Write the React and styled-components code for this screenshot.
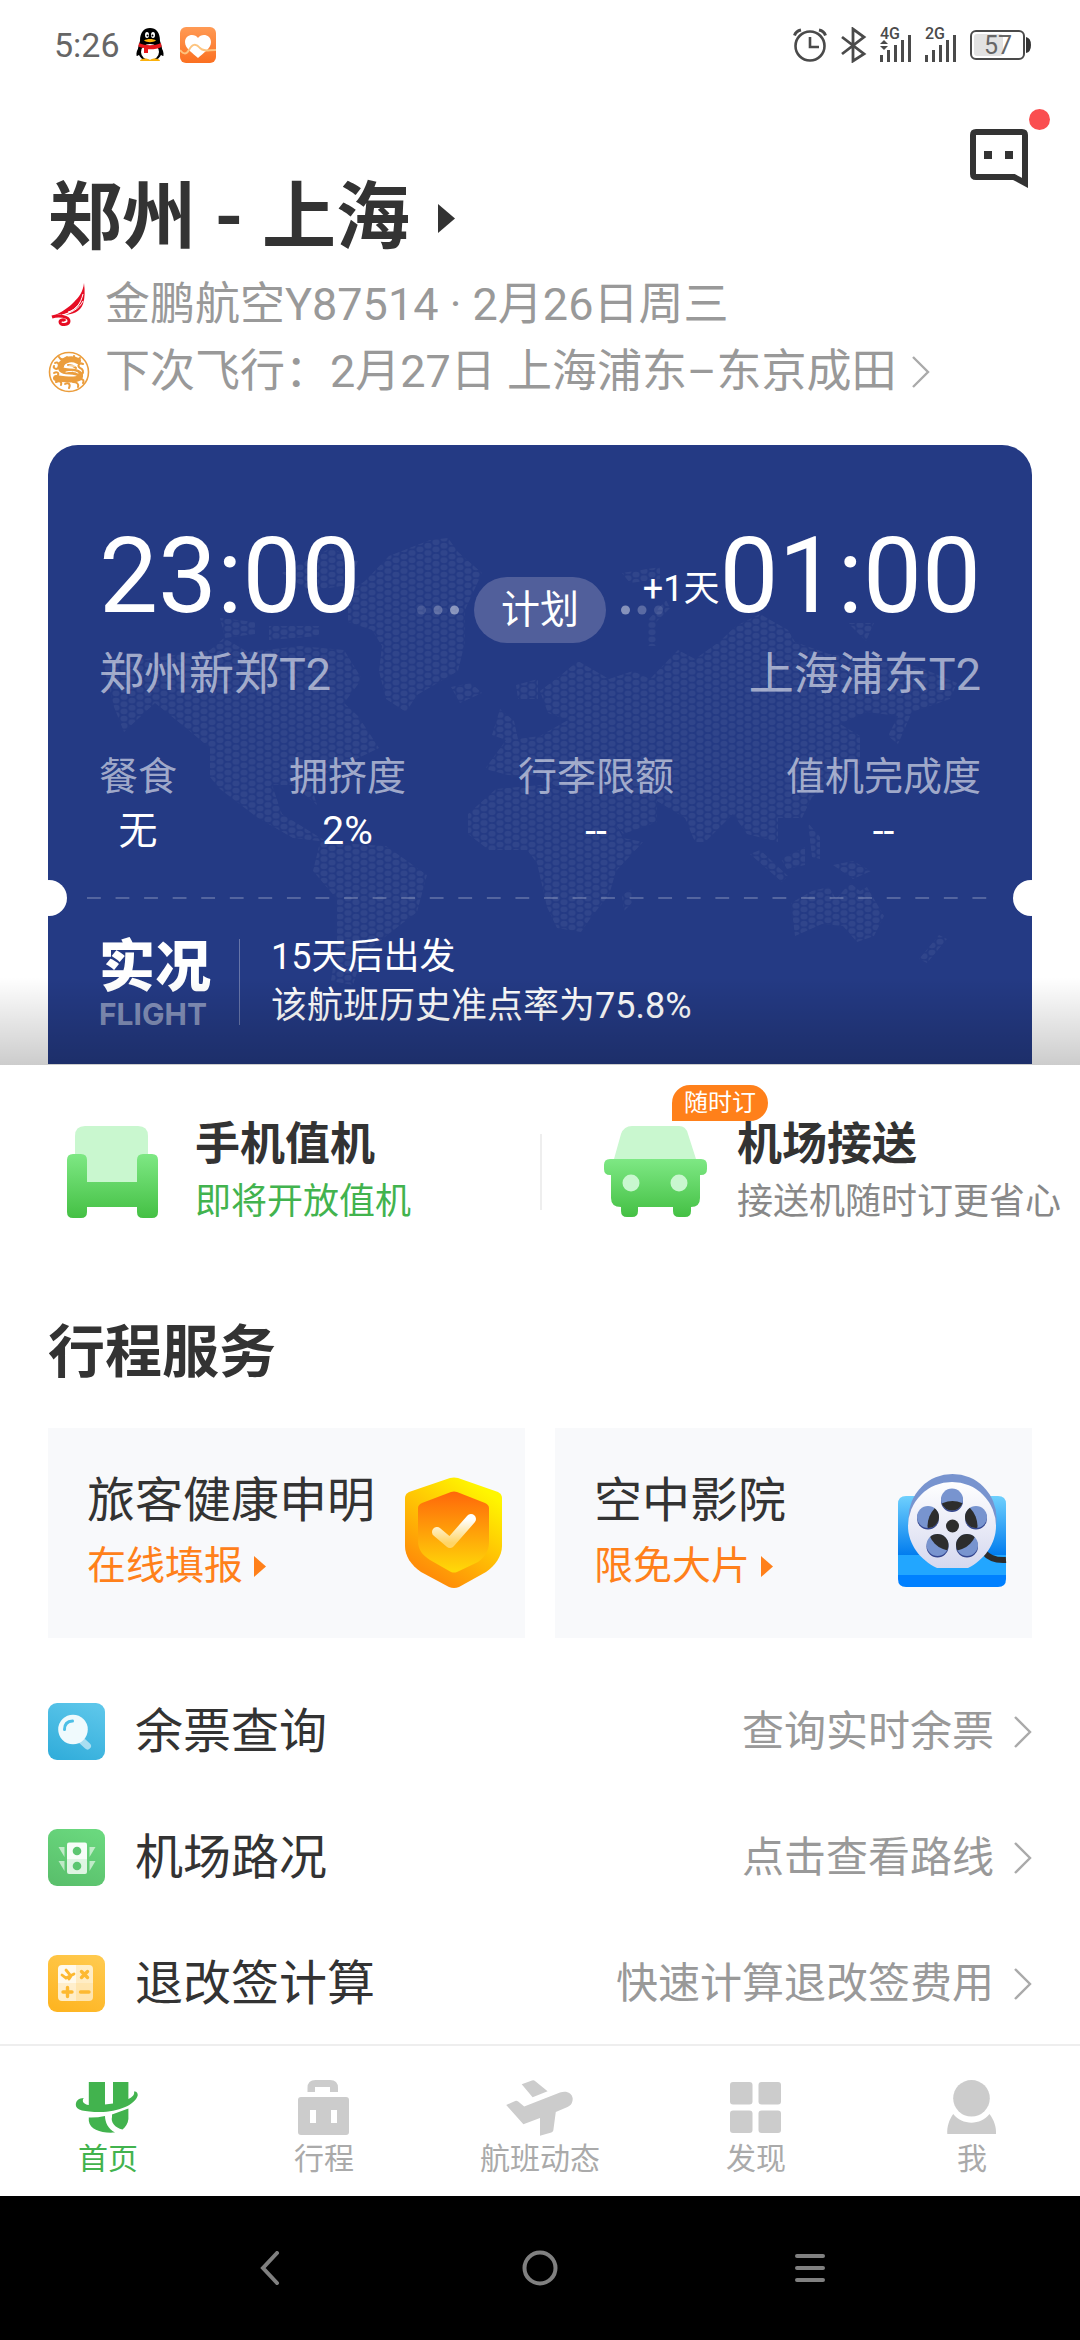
import React, { useState } from "react";
import styled, { createGlobalStyle } from "styled-components";

const GlobalStyle = createGlobalStyle`
  * {
    box-sizing: border-box;
  }

  body {
    margin: 0;
    background-color: #fff;
    color: #333;
    font-family: Roboto, "Noto Sans CJK SC", sans-serif;
  }

  h1, h2, h3, p, dl, dt, dd {
    margin: 0;
  }

  a {
    color: inherit;
    text-decoration: none;
  }

  button {
    padding: 0;
    border: none;
    background: none;
    color: inherit;
    font: inherit;
    cursor: pointer;
  }

  svg {
    display: block;
    flex-shrink: 0;
  }
`;

const Page = styled.div`
  display: flex;
  flex-direction: column;
  min-height: 100vh;
`;

const Main = styled.main`
  flex: 1;
`;

const StatusBar = styled.div`
  display: flex;
  justify-content: space-between;
  align-items: center;
  height: 90px;
  padding: 0 48px 0 54px;
  font-size: 34px;
  color: #666;
`;

const StatusGroup = styled.div`
  display: flex;
  align-items: center;
  gap: ${(props) => props.$gap}px;
`;

const Header = styled.header`
  padding: 39px 48px 40px;
`;

const HeaderTop = styled.div`
  display: flex;
  justify-content: space-between;
  align-items: flex-start;
  margin-bottom: 11px;
`;

const Route = styled.button`
  display: flex;
  align-items: center;
  gap: 28px;
  margin-top: 47px;
`;

const RouteName = styled.h1`
  font-size: 74px;
  line-height: 84px;
  font-weight: 700;
`;

const MessageButton = styled.button`
  position: relative;
`;

const RedDot = styled.span`
  position: absolute;
  top: -20px;
  right: -18px;
  width: 21px;
  height: 21px;
  border-radius: 50%;
  background-color: #fa4e50;
`;

const InfoLine = styled.a`
  display: flex;
  align-items: center;
  gap: 15px;
  font-size: 45px;
  line-height: 67px;
  color: #999;
`;

const Hero = styled.section`
  position: relative;
  padding: 0 48px 1px;
`;

const HeroShade = styled.div`
  position: absolute;
  left: 0;
  right: 0;
  bottom: 0;
  height: 88px;
  background: linear-gradient(rgba(0, 0, 0, 0), rgba(0, 0, 0, 0.2));
  pointer-events: none;
`;

const FlightCard = styled.div`
  position: relative;
  padding: 78px 51px 33px;
  border-radius: 30px 30px 0 0;
  background-color: #243a84;
  color: #fff;
`;

const MapLayer = styled.svg`
  position: absolute;
  left: 0;
  top: 0;
  width: 100%;
`;

const Legs = styled.div`
  position: relative;
  display: grid;
  grid-template-columns: 1fr auto 1fr;
`;

const Leg = styled.div`
  display: flex;
  flex-direction: column;
  align-items: ${(props) => (props.$end ? "flex-end" : "flex-start")};
  gap: 14px;
  min-width: 0;
  white-space: nowrap;
`;

const Clock = styled.div`
  display: flex;
  align-items: flex-end;
  font-size: 105px;
  line-height: 108px;
`;

const DayOffset = styled.span`
  font-size: 36px;
  line-height: 84px;
`;

const Airport = styled.span`
  font-size: 45px;
  line-height: 60px;
  color: rgba(255, 255, 255, 0.58);
`;

const PlanStatus = styled.div`
  display: flex;
  align-items: center;
  align-self: start;
  gap: 15px;
  margin-top: 54px;
`;

const Pill = styled.span`
  padding: 0 27px;
  border-radius: 33px;
  background-color: #515f9b;
  font-size: 39px;
  line-height: 66px;
`;

const Stats = styled.dl`
  position: relative;
  display: flex;
  justify-content: space-between;
  margin-top: 45px;
  font-size: 39px;
  line-height: 54px;
  text-align: center;

  dt {
    color: rgba(255, 255, 255, 0.58);
  }
`;

const Tear = styled.div`
  position: relative;
  margin: 39px -51px 34px;
  padding: 0 31px 0 39px;
`;

const TearLine = styled.div`
  height: 2px;
  background-image: linear-gradient(90deg, rgba(255, 255, 255, 0.22) 50%, transparent 50%);
  background-size: 29px 2px;
  background-repeat: round;
`;

const Notch = styled.span`
  position: absolute;
  top: -17px;
  ${(props) => props.$side}: -17px;
  width: 36px;
  height: 36px;
  border-radius: 50%;
  background-color: #fff;
`;

const Live = styled.div`
  position: relative;
  display: flex;
  align-items: center;
`;

const LiveLogo = styled.div`
  display: flex;
  flex-direction: column;
  width: 140px;
  font-weight: 900;
  font-size: 56px;
  line-height: 64px;

  small {
    font-family: Inter, sans-serif;
    font-weight: 700;
    font-size: 30px;
    line-height: 30px;
    color: rgba(255, 255, 255, 0.45);
  }
`;

const LiveText = styled.div`
  position: relative;
  padding-left: 32px;
  font-size: 36px;
  line-height: 49px;

  &::before {
    content: "";
    position: absolute;
    left: 0;
    top: 6px;
    bottom: 6px;
    width: 1px;
    background-color: rgba(255, 255, 255, 0.3);
  }
`;

const Shortcuts = styled.section`
  display: grid;
  grid-template-columns: 1fr 1fr;
  align-items: center;
  padding: 50px 0 0;
`;

const Shortcut = styled.a`
  position: relative;
  display: flex;
  align-items: center;
  gap: 29px;
  padding-left: ${(props) => (props.$second ? 60 : 58)}px;
  white-space: nowrap;
`;

const ShortcutDivider = styled.span`
  position: absolute;
  left: 0;
  width: 2px;
  height: 76px;
  background-color: #eee;
`;

const ShortcutTitle = styled.h3`
  font-size: 45px;
  line-height: 60px;
  font-weight: 700;
`;

const ShortcutNote = styled.p`
  font-size: 36px;
  line-height: 54px;
  color: ${(props) => props.$color};
`;

const Tag = styled.span`
  position: absolute;
  left: 132px;
  top: -30px;
  padding: 0 12px;
  border-radius: 18px 18px 18px 0;
  background-color: #ff801a;
  color: #fff;
  font-size: 24px;
  line-height: 36px;
`;

const Services = styled.section`
  padding: 88px 48px 30px;
`;

const SectionTitle = styled.h2`
  font-size: 57px;
  line-height: 72px;
  font-weight: 700;
`;

const Promos = styled.div`
  display: grid;
  grid-template-columns: 1fr 1fr;
  gap: 30px;
  margin: 39px 0 65px;
`;

const Promo = styled.a`
  display: flex;
  justify-content: space-between;
  align-items: center;
  padding: 40px 16px 40px 39px;
  background-color: #f8f9fb;
  white-space: nowrap;
`;

const PromoTitle = styled.h3`
  font-size: 48px;
  line-height: 66px;
  font-weight: 400;
`;

const PromoNote = styled.p`
  display: flex;
  align-items: center;
  gap: 11px;
  font-size: 39px;
  line-height: 64px;
  color: #ff801a;
`;

const ServiceList = styled.div`
  display: flex;
  flex-direction: column;
  gap: 69px;
`;

const ServiceRow = styled.a`
  display: flex;
  align-items: center;
  font-size: 48px;
  line-height: 57px;
`;

const ServiceName = styled.span`
  flex: 1;
  padding-left: 30px;
`;

const ServiceHint = styled.span`
  margin-right: 20px;
  font-size: 42px;
  color: #999;
`;

const TabBar = styled.nav`
  display: grid;
  grid-template-columns: repeat(5, 1fr);
  border-top: 2px solid #eee;
  background-color: #fff;
`;

const Tab = styled.button`
  display: flex;
  flex-direction: column;
  align-items: center;
  gap: 5px;
  padding: 34px 0 19px;
  font-size: 30px;
  line-height: 36px;
  color: ${(props) => (props.$active ? "#42b34e" : "#aaa")};

  svg {
    fill: ${(props) => (props.$active ? "#42b34e" : "#ccc")};
  }
`;

const SystemNav = styled.div`
  display: grid;
  grid-template-columns: repeat(3, 1fr);
  align-items: center;
  justify-items: center;
  height: 144px;
  padding: 0 12.5%;
  background-color: #000;
`;

function PenguinIcon() {
  return (
    <svg width="28" height="34" viewBox="0 0 28 34">
      <path d="M4 18C1 21 0 25 .6 28c1.600 0 3-1.500 4-3zM24 18c3 3 4 7 3.400 10-1.600 0-3-1.500-4-3z" fill="#000" />
      <path d="M4 13C4 4 8 0 14 0s10 4 10 13c1 3 2 6 2 9 0 7-5 11-12 11S2 29 2 22c0-3 1-6 2-9z" fill="#000" />
      <ellipse cx="14" cy="24" rx="9" ry="8" fill="#fff" />
      <path d="M4 33c0-2 4-3 8-2l2 1 2-1c4-1 8 0 8 2z" fill="#fbb10c" />
      <ellipse cx="11" cy="7" rx="2" ry="3" fill="#fff" />
      <ellipse cx="17" cy="7" rx="2" ry="3" fill="#fff" />
      <circle cx="11.500" cy="7.500" r="1" fill="#000" />
      <circle cx="16.500" cy="7.500" r="1" fill="#000" />
      <path d="M8 12.500c3-2 9-2 12 0-3 2.200-9 2.200-12 0z" fill="#fbb10c" />
      <path d="M3 15c6 3 16 3 22 0l.600 4c-4 2-9 2.500-13.600 2.200V25H8v-5c-2-.300-4-.700-5.600-1.500z" fill="#e8161b" />
    </svg>
  );
}

function HealthIcon() {
  return (
    <svg width="36" height="36" viewBox="0 0 36 36">
      <defs>
        <linearGradient id="health" x1="0" y1="0" x2="0" y2="1">
          <stop offset="0" stopColor="#ff9a55" />
          <stop offset="1" stopColor="#fb7021" />
        </linearGradient>
      </defs>
      <rect width="36" height="36" rx="6" fill="url(#health)" />
      <path d="M18 11c3-5 13-4 13 4 0 7-8 11-13 16C13 26 5 22 5 15c0-8 10-9 13-4z" fill="#fff" />
      <path d="M0 23c3 4 6 5 9 0 3-6 7-7 11-2 4 4 8 2 16 2" fill="none" stroke="#fdc47f" strokeWidth="2" />
    </svg>
  );
}

function AlarmIcon() {
  return (
    <svg width="34" height="36" viewBox="0 0 34 36" fill="none" stroke="#4a4a4a" strokeWidth="2.600">
      <circle cx="17" cy="19" r="14.500" />
      <path d="M17 10v10h9" />
      <path d="M1.500 8.500Q3 4 8 3M32.500 8.500Q31 4 26 3" strokeWidth="3" />
    </svg>
  );
}

function BluetoothIcon() {
  return (
    <svg width="27" height="36" viewBox="0 0 27 36" fill="none" stroke="#4a4a4a" strokeWidth="2.800">
      <path d="M2 10l22 17-11 7V2l11 8L2 27" />
    </svg>
  );
}

function SignalIcon({ label, data }) {
  return (
    <svg width="32" height="52" viewBox="0 -8 32 52" fill="#4a4a4a">
      <text x="0" y="12" fontFamily="Roboto" fontSize="16" fontWeight="500">
        {label}
      </text>
      {data && <path d="M0 17l4-4 4 4zM0 19h8l-4 4z" />}
      <rect x="0" y="28" width="3" height="7" />
      <rect x="7" y="23" width="3" height="12" />
      <rect x="14" y="18" width="3" height="17" />
      <rect x="21" y="13" width="3" height="22" />
      <rect x="28" y="8" width="3" height="27" />
    </svg>
  );
}

function BatteryIcon({ level }) {
  return (
    <svg width="62" height="32" viewBox="0 0 62 32">
      <rect x="1" y="2" width="53" height="28" rx="5" fill="none" stroke="#4a4a4a" strokeWidth="2" />
      <rect x="4" y="5" width="29" height="22" rx="3" fill="#e2e2e2" />
      <path d="M56 8q5 1 5 8t-5 8z" fill="#333" />
      <text x="28" y="25" textAnchor="middle" fontFamily="Roboto" fontSize="25" fill="#666">
        {level}
      </text>
    </svg>
  );
}

function Triangle({ width, height, color }) {
  return (
    <svg width={width} height={height} viewBox="0 0 10 10" preserveAspectRatio="none">
      <path d="M0 0l10 5-10 5z" fill={color} />
    </svg>
  );
}

function Chevron() {
  return (
    <svg width="18" height="32" viewBox="0 0 18 32" fill="none" stroke="#aaa" strokeWidth="2.400">
      <path d="M1 1l15 15L1 31" />
    </svg>
  );
}

function MessageIcon() {
  return (
    <svg width="62" height="60" viewBox="0 0 62 60">
      <path d="M6 3h46q3 0 3 3v48l-11-6H6q-3 0-3-3V6q0-3 3-3z" fill="none" stroke="#333" strokeWidth="6" />
      <path d="M14 22h8v8h-8zM35 22h8v8h-8z" fill="#333" />
    </svg>
  );
}

function SuparnaLogo() {
  return (
    <svg width="42" height="44" viewBox="0 0 42 44">
      <path d="M36 0c1 8 1 15-1 21-3 8-10 10-18 11 7-3 13-7 16-14-4 6-10 11-19 14-2-1-6 0-9 1C14 29 20 25 26 19c5-5 9-10 10-19z" fill="#e60c23" />
      <path d="M20 29c8-2 13-9 15-18M14 32c9-2 17-6 21-14" stroke="#fff" strokeWidth="1" fill="none" />
      <path d="M4 34c6-2 17-1 17 4 0 4-9 5-9 1 0-2 4-3 5-1" stroke="#e60c23" strokeWidth="3" fill="none" />
    </svg>
  );
}

function JuneyaoLogo() {
  return (
    <svg width="42" height="42" viewBox="0 0 42 42" fill="none" stroke="#eb9d3c" strokeLinecap="round">
      <circle cx="21" cy="21" r="19.500" strokeWidth="1.600" />
      <path d="M30 10c-8-4-18 0-17 7 1 6 16 1 19 7 1 6-11 5-24 3" strokeWidth="6" />
      <path d="M11 6c2 4 5 2 8 0M7 12c3-2 5 2 3 5-2 2-5 0-4-2M26 5c0 4 4 4 6 2M35 13c-4-2-6 2-3 4 3 1 4 4 2 6M6 22c3-2 5 0 4 2M8 31c4-2 6 0 5 3M17 33c3-2 6 0 4 4M25 31c4 0 6 2 5 5M32 28c4 0 4 2 3 4M20 14c3 0 6 1 8 3" strokeWidth="2" />
      <path d="M21 15h6M18 21c4-1 9-1 12 1" stroke="#fff" strokeWidth="1" />
    </svg>
  );
}

function WorldMap() {
  return (
    <MapLayer viewBox="0 0 984 619" aria-hidden="true">
      <defs>
        <pattern id="dots" width="16" height="7.200" patternUnits="userSpaceOnUse">
          <ellipse cx="4" cy="3.600" rx="3.600" ry="2.900" fill="#fff" />
          <ellipse cx="12" cy="0" rx="3.600" ry="2.900" fill="#fff" />
          <ellipse cx="12" cy="7.200" rx="3.600" ry="2.900" fill="#fff" />
        </pattern>
      </defs>
      <g fill="url(#dots)" opacity="0.055">
        <path d="M55 218L97 214 162 205 176 193 200 207 252 201 296 205 314 234 296 258 310 271 331 303 296 320 262 336 269 360 245 340 224 340 234 369 279 397 245 393 210 373 172 344 162 332V303L138 283 107 258 76 287 66 262z" />
        <path d="M172 173l35 4v12l-30 4zM221 181h50v10l-50 4zM234 128L283 103 310 116 300 140 262 146z" />
        <path d="M317 136L341 111 382 95 400 93 410 107 434 128 417 165V197L410 226 369 250 358 267 338 254 331 226 334 201 324 185 300 177V148z" />
        <path d="M403 242l20-4 11 10-22 10z" />
        <path d="M272 397L338 401 379 430 369 467 338 491 314 511 305 540 283 536 289 495V454L265 426z" />
        <path d="M420 369L448 344 492 340 520 348 557 360 575 393 595 397 568 426 561 450 544 471 533 487 509 483 499 462 489 418 479 405H441L420 389z" />
        <path d="M437 324L458 295 444 290 452 264 466 276 470 294 492 291 520 275 500 268 492 246 513 230 530 216 561 234 585 226 602 234 630 205 647 214 671 197 688 181 712 169 740 185 747 197 781 209 816 214 871 222 909 238 902 254 864 267 850 299 840 291 850 271 819 267 792 279 812 291V320L764 352 754 373 730 373V397L699 389 685 369 657 397H647L637 373 609 356V377L575 389 557 365 513 344 492 332 460 330z" />
        <path d="M600 175l18-20 4 8-14 14v24h-8zM574 128l38-6v12l-30 4zM800 178h26l-8 18zM468 240l22-6v20h-20z" />
        <path d="M702 409l10-4 28 26-6 6zM733 414l24-12v18l-18 4zM760 378l12 14v22l-8-2zM785 420l20-4 18 10-18 8z" />
        <path d="M743 458L764 446 781 442 788 454 802 438 812 446 819 442 836 471 826 491 809 497 795 481 774 479 747 491zM891 490l8 4-20 24-8-4zM574 450l10-6v14l-8 8z" />
      </g>
    </MapLayer>
  );
}

function Dots({ reverse }) {
  const levels = reverse ? [0.45, 0.25, 0.12] : [0.12, 0.25, 0.45];
  return (
    <svg width="42" height="10" viewBox="0 0 42 10" fill="#fff">
      {levels.map((level, i) => (
        <circle key={level} cx={4.5 + i * 16.5} cy="5" r="4.500" opacity={level} />
      ))}
    </svg>
  );
}

function GreenGradient({ id }) {
  return (
    <linearGradient id={id} x1="0" y1="0" x2="0" y2="1">
      <stop offset="0" stopColor="#7ee884" />
      <stop offset="1" stopColor="#44c044" />
    </linearGradient>
  );
}

function SeatIcon() {
  return (
    <svg width="108" height="92" viewBox="0 0 108 92">
      <defs>
        <GreenGradient id="seat" />
      </defs>
      <path d="M17 60V10Q17 0 27 0h53q10 0 10 10v50z" fill="#c9f7cf" />
      <path d="M15 28h8q6 0 6 6v22h50V34q0-6 6-6h9q6 0 6 6v52q0 6-6 6h-9q-6 0-6-6v-5H29v5q0 6-6 6h-8q-6 0-6-6V34q0-6 6-6z" fill="url(#seat)" />
    </svg>
  );
}

function CarIcon() {
  return (
    <svg width="108" height="92" viewBox="0 0 108 92">
      <defs>
        <GreenGradient id="car" />
      </defs>
      <path d="M14 33l7-25q3-8 11-8h47q7 0 9 8l8 25z" fill="#c9f7cf" />
      <path d="M10 33h91q6 0 6 6v4q0 6-6 6h-1v23q0 9-9 9v4q0 6-6 6h-6q-6 0-6-6v-4H38v4q0 6-6 6h-5q-6 0-6-6v-4q-10 0-10-9V49h-1q-6 0-6-6v-4q0-6 6-6z" fill="url(#car)" />
      <circle cx="31" cy="57" r="8.500" fill="#c9f7cf" />
      <circle cx="79" cy="57" r="8.500" fill="#c9f7cf" />
    </svg>
  );
}

function ShieldIcon() {
  return (
    <svg width="120" height="118" viewBox="-16 -3 120 118">
      <defs>
        <linearGradient id="shieldOuter" x1="0.800" y1="0.100" x2="0.300" y2="0.900">
          <stop offset="0" stopColor="#fff600" />
          <stop offset="1" stopColor="#ff8e08" />
        </linearGradient>
        <linearGradient id="shieldInner" x1="0" y1="0" x2="0" y2="1">
          <stop offset="0" stopColor="#ff670a" />
          <stop offset="1" stopColor="#ffda08" />
        </linearGradient>
        <linearGradient id="shieldTick" x1="0" y1="0" x2="0" y2="1">
          <stop offset="0" stopColor="#fff" />
          <stop offset="1" stopColor="#ffd566" />
        </linearGradient>
      </defs>
      <path d="M45 1q4-1 8 0l40 14q4 2 4 6v48c0 10-7 20-16 26l-27 15q-5 2-10 0L16 95C6 88 0 79 0 69V21q0-4 4-6z" fill="url(#shieldOuter)" />
      <path d="M46 15q3-1 6 0l28 11q4 2 4 5v34c0 9-4 15-11 20L52 95q-3 1-6 0L25 83c-8-5-12-11-12-19V31q0-3 4-5z" fill="url(#shieldInner)" />
      <path d="M32 55l13 11 21-24" fill="none" stroke="url(#shieldTick)" strokeWidth="10" strokeLinecap="round" strokeLinejoin="round" />
    </svg>
  );
}

const reelHoles = [
  [54, 25.5],
  [30, 43],
  [78, 43],
  [39.5, 71],
  [69, 71],
];

function FilmIcon() {
  return (
    <svg width="120" height="118" viewBox="-2 0 120 118">
      <defs>
        <linearGradient id="filmBase" x1="0" y1="0" x2="0" y2="1">
          <stop offset="0" stopColor="#6fd0fd" />
          <stop offset="1" stopColor="#007bee" />
        </linearGradient>
        <linearGradient id="reel" x1="0" y1="0" x2="0" y2="1">
          <stop offset="0" stopColor="#fff" />
          <stop offset="1" stopColor="#d5d8ef" />
        </linearGradient>
        <clipPath id="holes">
          {reelHoles.map(([x, y]) => (
            <circle key={`${x}-${y}`} cx={x} cy={y} r="11" />
          ))}
        </clipPath>
      </defs>
      <path d="M0 30q0-8 8-8h92q8 0 8 8v52H0z" fill="url(#filmBase)" />
      <path d="M0 81h108v21H0z" fill="#22a6ff" />
      <path d="M0 101h108v4q0 8-8 8H8q-8 0-8-8z" fill="#0080ff" />
      <path d="M86 78q7 9 22 8" fill="none" stroke="#2d2d2d" strokeWidth="6" />
      <ellipse cx="54.500" cy="44" rx="44" ry="44" fill="#7894cf" />
      <path d="M39 94C22 86 10 70 10 52a44 44 0 0 1 88 0c0 18-12 34-28 42z" fill="url(#reel)" />
      {reelHoles.map(([x, y]) => (
        <g key={`${x}-${y}`}>
          <circle cx={x} cy={y + 1.5} r="11" fill="#33458f" />
          <circle cx={x} cy={y} r="11" fill="#7894cf" />
        </g>
      ))}
      <circle cx="54.500" cy="52" r="25" fill="#2d2d2d" clipPath="url(#holes)" />
      <circle cx="54.500" cy="52" r="6.500" fill="#2d2d2d" />
    </svg>
  );
}

function IconTile({ id, from, to, children }) {
  return (
    <svg width="57" height="57" viewBox="0 0 57 57">
      <defs>
        <linearGradient id={id} x1="0.700" y1="0" x2="0.300" y2="1">
          <stop offset="0" stopColor={from} />
          <stop offset="1" stopColor={to} />
        </linearGradient>
      </defs>
      <rect width="57" height="57" rx="9" fill={`url(#${id})`} />
      {children}
    </svg>
  );
}

function TicketSearchIcon() {
  return (
    <IconTile id="tileBlue" from="#5cc6ea" to="#33aedb">
      <path d="M33 37l6.500 6" stroke="#fff" strokeOpacity="0.550" strokeWidth="7" strokeLinecap="round" />
      <circle cx="25" cy="26.500" r="14.800" fill="#f0fafd" />
      <path d="M16.500 26.500q0-8 8-8.500" fill="none" stroke="#4dbfe6" strokeWidth="3" strokeLinecap="round" />
    </IconTile>
  );
}

function TrafficIcon() {
  return (
    <IconTile id="tileGreen" from="#6ad87e" to="#5ac06c">
      <path d="M21 13.500h16q2 0 2 2V30H19V15.500q0-2 2-2z" fill="#fff" fillOpacity="0.950" />
      <path d="M19 30h20v13q0 2-2 2H21q-2 0-2-2z" fill="#fff" fillOpacity="0.800" />
      <path d="M10.500 18h6v10zM10.500 32h6v10zM47.500 18h-6v10zM47.500 32h-6v10z" fill="#fff" fillOpacity="0.600" />
      <circle cx="29" cy="22" r="4.300" fill="#5cc670" />
      <circle cx="29" cy="37" r="4.300" fill="#5cc670" />
    </IconTile>
  );
}

function RefundIcon() {
  return (
    <IconTile id="tileYellow" from="#ffc94d" to="#feb522">
      <path d="M14 10h14v18H10V14q0-4 4-4z" fill="#fff" fillOpacity="0.900" />
      <path d="M28 10h13q4 0 4 4v14H28z" fill="#fff" fillOpacity="0.700" />
      <path d="M10 28h18v18H14q-4 0-4-4z" fill="#fff" fillOpacity="0.750" />
      <path d="M28 28h17v14q0 4-4 4H28z" fill="#fff" fillOpacity="0.600" />
      <path d="M14 20l4 3 8-4M18 15l5 6-2 3" fill="none" stroke="#fdb931" strokeWidth="2.800" strokeLinecap="round" />
      <path d="M33.500 16.500l6 6M39.500 16.500l-6 6M15 37h9M19.500 32.500v9M32.500 37h8.500" stroke="#fdb931" strokeWidth="3.400" strokeLinecap="round" />
    </IconTile>
  );
}

const tabs = [
  {
    name: "首页",
    icon: (
      <>
        <path d="M14.800 2H31v22.500l8-1V2h15.400v17c4-2 6.500-4.500 5.600-7.500 2.500-.500 4 1.500 3.700 4C61 25 44 32 26 32 10 32 2 30 1.800 25 2 20 5 18.300 9.700 18c-2.200 3-.200 6.500 5.100 7z" />
        <path d="M14.800 37.500q8 .300 16.200-1.500c0 6 3 13 10 16.500-13 1-25-2.500-26.200-11.500z" />
        <path d="M38 34.500l16.400-6V39c-.400 4.500-2.900 8-5.900 10.500-7.500-1.500-12-7.500-10.500-12.500z" />
      </>
    ),
  },
  {
    name: "行程",
    icon: (
      <>
        <path d="M17.500 12V8q0-8 8-8H40q8 0 8 8v4h-8V7H25v5z" />
        <path fillRule="evenodd" d="M11 17h45q3 0 3 3v32q0 3-3 3H11q-3 0-3-3V20q0-3 3-3zm9 13v13h6V30zm21 0v13h6V30z" />
      </>
    ),
  },
  {
    name: "航班动态",
    icon: (
      <>
        <path d="M15.700 4.300L26 .500q2-.500 3 .500l12.600 10.300-15 6z" />
        <path d="M.200 25l9-4q1.500-.500 3 .500l6 5L54 12.500c6-2 12 0 12.700 6 0 4-1.500 7-5.200 8.500L49.800 32l-2.500 18.500q-.500 1.500-2 2L34 55.700V38l-16.600 6.300z" />
      </>
    ),
  },
  {
    name: "发现",
    icon: (
      <>
        <rect x="8" y="2" width="22.500" height="22.500" rx="3" />
        <rect x="36.500" y="2" width="22.500" height="22.500" rx="3" />
        <rect x="8" y="30.500" width="22.500" height="22.500" rx="3" />
        <rect x="36.500" y="30.500" width="22.500" height="22.500" rx="3" />
      </>
    ),
  },
  {
    name: "我",
    icon: (
      <>
        <circle cx="33.500" cy="18.300" r="18.300" />
        <path d="M15.200 34c9 11.500 27.500 11.500 36.300 0C56 40 58.500 47 58 54H9.300C8.800 47 11 40 15.200 34z" />
      </>
    ),
  },
];

const stats = [
  { label: "餐食", value: "无" },
  { label: "拥挤度", value: "2%" },
  { label: "行李限额", value: "--" },
  { label: "值机完成度", value: "--" },
];

const promos = [
  { title: "旅客健康申明", note: "在线填报", icon: <ShieldIcon /> },
  { title: "空中影院", note: "限免大片", icon: <FilmIcon /> },
];

const services = [
  { name: "余票查询", hint: "查询实时余票", icon: <TicketSearchIcon /> },
  { name: "机场路况", hint: "点击查看路线", icon: <TrafficIcon /> },
  { name: "退改签计算", hint: "快速计算退改签费用", icon: <RefundIcon /> },
];

function App() {
  const [activeTab, setActiveTab] = useState("首页");

  return (
    <Page>
      <GlobalStyle />
      <StatusBar>
        <StatusGroup $gap={16}>
          <span>5:26</span>
          <PenguinIcon />
          <HealthIcon />
        </StatusGroup>
        <StatusGroup $gap={13}>
          <AlarmIcon />
          <BluetoothIcon />
          <SignalIcon label="4G" data />
          <SignalIcon label="2G" />
          <BatteryIcon level="57" />
        </StatusGroup>
      </StatusBar>

      <Main>
        <Header>
          <HeaderTop>
            <Route>
              <RouteName>郑州 - 上海</RouteName>
              <Triangle width={17} height={29} color="#333" />
            </Route>
            <MessageButton aria-label="消息">
              <MessageIcon />
              <RedDot />
            </MessageButton>
          </HeaderTop>
          <InfoLine href="#flight">
            <SuparnaLogo />
            <span>金鹏航空Y87514 · 2月26日周三</span>
          </InfoLine>
          <InfoLine href="#next">
            <JuneyaoLogo />
            <span>下次飞行：2月27日 上海浦东–东京成田</span>
            <Chevron />
          </InfoLine>
        </Header>

        <Hero>
          <FlightCard>
            <WorldMap />
            <Legs>
              <Leg>
                <Clock>23:00</Clock>
                <Airport>郑州新郑T2</Airport>
              </Leg>
              <PlanStatus>
                <Dots />
                <Pill>计划</Pill>
                <Dots reverse />
              </PlanStatus>
              <Leg $end>
                <Clock>
                  <DayOffset>+1天</DayOffset>
                  01:00
                </Clock>
                <Airport>上海浦东T2</Airport>
              </Leg>
            </Legs>
            <Stats>
              {stats.map((stat) => (
                <div key={stat.label}>
                  <dt>{stat.label}</dt>
                  <dd>{stat.value}</dd>
                </div>
              ))}
            </Stats>
            <Tear>
              <Notch $side="left" />
              <TearLine />
              <Notch $side="right" />
            </Tear>
            <Live>
              <LiveLogo>
                实况
                <small>FLIGHT</small>
              </LiveLogo>
              <LiveText>
                <p>15天后出发</p>
                <p>该航班历史准点率为75.8%</p>
              </LiveText>
            </Live>
          </FlightCard>
          <HeroShade />
        </Hero>

        <Shortcuts>
          <Shortcut href="#checkin">
            <SeatIcon />
            <div>
              <ShortcutTitle>手机值机</ShortcutTitle>
              <ShortcutNote $color="#42b34e">即将开放值机</ShortcutNote>
            </div>
          </Shortcut>
          <Shortcut href="#transfer" $second>
            <ShortcutDivider />
            <CarIcon />
            <div>
              <ShortcutTitle>机场接送</ShortcutTitle>
              <ShortcutNote $color="#888">接送机随时订更省心</ShortcutNote>
            </div>
            <Tag>随时订</Tag>
          </Shortcut>
        </Shortcuts>

        <Services>
          <SectionTitle>行程服务</SectionTitle>
          <Promos>
            {promos.map((promo) => (
              <Promo key={promo.title} href="#promo">
                <div>
                  <PromoTitle>{promo.title}</PromoTitle>
                  <PromoNote>
                    {promo.note}
                    <Triangle width={12} height={21} color="#ff801a" />
                  </PromoNote>
                </div>
                {promo.icon}
              </Promo>
            ))}
          </Promos>
          <ServiceList>
            {services.map((service) => (
              <ServiceRow key={service.name} href="#service">
                {service.icon}
                <ServiceName>{service.name}</ServiceName>
                <ServiceHint>{service.hint}</ServiceHint>
                <Chevron />
              </ServiceRow>
            ))}
          </ServiceList>
        </Services>
      </Main>

      <TabBar>
        {tabs.map((tab) => (
          <Tab key={tab.name} $active={tab.name === activeTab} onClick={() => setActiveTab(tab.name)}>
            <svg width="68" height="56" viewBox="0 0 68 56">
              {tab.icon}
            </svg>
            {tab.name}
          </Tab>
        ))}
      </TabBar>

      <SystemNav>
        <button aria-label="返回">
          <svg width="20" height="34" viewBox="0 0 20 34" fill="none" stroke="#808080" strokeWidth="4" strokeLinecap="round">
            <path d="M17 2L3 17l14 15" />
          </svg>
        </button>
        <button aria-label="主屏幕">
          <svg width="36" height="36" viewBox="0 0 36 36" fill="none" stroke="#808080" strokeWidth="4">
            <circle cx="18" cy="18" r="15.500" />
          </svg>
        </button>
        <button aria-label="菜单">
          <svg width="32" height="32" viewBox="0 0 32 32" stroke="#808080" strokeWidth="4" strokeLinecap="round">
            <path d="M3 4h26M3 16h26M3 28h26" />
          </svg>
        </button>
      </SystemNav>
    </Page>
  );
}

export default App;
